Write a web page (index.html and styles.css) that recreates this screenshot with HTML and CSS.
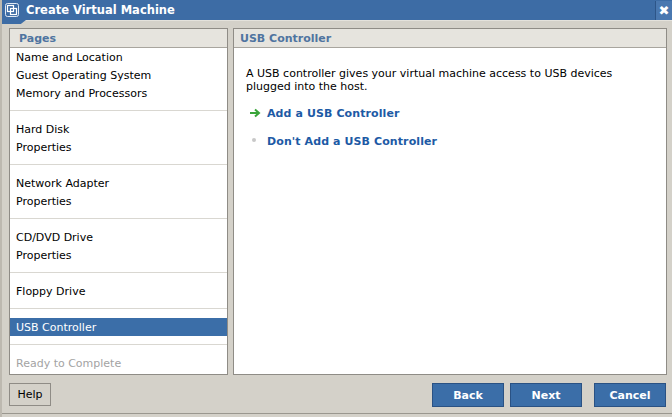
FILE: index.html
```html
<!DOCTYPE html>
<html>

<head>
    <meta charset="utf-8" />
    <title>Create Virtual Machine</title>
    <link rel="stylesheet" href="styles.css">
</head>

<body>
    <div class="window">

        <div class="titlebar">
            <svg class="title-icon" width="16" height="16" viewBox="0 0 16 16">
                <rect x="1.5" y="1.5" width="13" height="13" rx="2" fill="none" stroke="#dfe8f3" stroke-width="1" />
                <rect x="3.5" y="3.5" width="6" height="6" fill="none" stroke="#ffffff" stroke-width="1.2" />
                <rect x="6.5" y="6.5" width="6" height="6" fill="none" stroke="#ffffff" stroke-width="1.2" />
            </svg>
            <span class="title-text">Create Virtual Machine</span>
            <span class="close-btn">&#x2716;</span>
        </div>

        <div class="main">
            <div class="panel pages">
                <div class="panel-heading">Pages</div>
                <div class="group first">
                    <div class="item">Name and Location</div>
                    <div class="item">Guest Operating System</div>
                    <div class="item">Memory and Processors</div>
                </div>
                <div class="group">
                    <div class="item">Hard Disk</div>
                    <div class="item">Properties</div>
                </div>
                <div class="group">
                    <div class="item">Network Adapter</div>
                    <div class="item">Properties</div>
                </div>
                <div class="group">
                    <div class="item">CD/DVD Drive</div>
                    <div class="item">Properties</div>
                </div>
                <div class="group">
                    <div class="item">Floppy Drive</div>
                </div>
                <div class="group">
                    <div class="item selected">USB Controller</div>
                </div>
                <div class="group">
                    <div class="item disabled">Ready to Complete</div>
                </div>
            </div>

            <div class="panel content">
                <div class="panel-heading">USB Controller</div>
                <div class="content-body">
                    <p class="intro">A USB controller gives your virtual machine access to USB devices plugged into the host.</p>
                    <div class="choice">
                        <svg class="marker" width="12" height="10" viewBox="0 0 12 10">
                            <path d="M1 5 H9" stroke="#3aa53a" stroke-width="2" />
                            <path d="M6 1.5 L10 5 L6 8.5" fill="none" stroke="#3aa53a" stroke-width="2" />
                        </svg>
                        <span class="choice-link">Add a USB Controller</span>
                    </div>
                    <div class="choice">
                        <svg class="marker" width="12" height="10" viewBox="0 0 12 10">
                            <circle cx="5" cy="4" r="2" fill="#c8c8c8" />
                        </svg>
                        <span class="choice-link">Don't Add a USB Controller</span>
                    </div>
                </div>
            </div>
        </div>

        <div class="footer">
            <button class="help-btn">Help</button>
            <div class="nav-buttons">
                <button class="nav-btn">Back</button>
                <button class="nav-btn">Next</button>
                <button class="nav-btn cancel">Cancel</button>
            </div>
        </div>

    </div>
</body>

</html>
```

FILE: styles.css
```css
body {
    margin: 0;
    background: #d4d1c9;
    font-family: "DejaVu Sans", Verdana, sans-serif;
    font-size: 11px;
    color: #000;
}

.window {
    width: 672px;
    height: 417px;
    overflow: hidden;
    position: relative;
    border-left: 2px solid #bdb9b0;
    box-sizing: border-box;
}

.titlebar {
    height: 20px;
    background: #3d6ca5;
    display: flex;
    align-items: center;
    border-bottom: 1px solid #e4e2dc;
    margin-left: -2px;
    position: relative;
}

/* little tab under the window icon */
.titlebar::after {
    content: "";
    position: absolute;
    left: 0;
    top: 20px;
    width: 26px;
    height: 4px;
    background: #3d6ca5;
    clip-path: polygon(0 0, 100% 0, 80% 100%, 0 100%);
}

.title-icon {
    margin: 0 6px 0 4px;
}

.title-text {
    color: #fff;
    font-weight: bold;
    font-size: 11.5px;
    flex: 1;
}

.close-btn {
    width: 16px;
    height: 19px;
    background: #4a78b0;
    border-left: 1px solid #2d5588;
    color: #fff;
    font-size: 13px;
    display: flex;
    align-items: center;
    justify-content: center;
}

.main {
    display: flex;
    gap: 5px;
    padding: 7px 5px 0 7px;
}

.panel {
    background: #fff;
    border: 1px solid #8f8c86;
    height: 345px;
}

.pages {
    width: 217px;
}

.content {
    flex: 1;
}

.panel-heading {
    height: 18px;
    line-height: 19px;
    background: #e6e4de;
    border-bottom: 1px solid #a8a59e;
    color: #4f74a0;
    font-weight: bold;
    padding-left: 9px;
}

.content .panel-heading {
    padding-left: 6px;
}

.group {
    border-top: 1px solid #d9d7d1;
    padding: 9px 0 8px;
}

.group.first {
    border-top: none;
    padding-top: 0;
}

.item {
    height: 18px;
    line-height: 19px;
    padding-left: 6px;
    white-space: nowrap;
}

.item.selected {
    background: #3b6ea8;
    color: #fff;
}

.item.disabled {
    color: #a3a3a3;
}

.content-body {
    padding: 19px 12px 0 12px;
}

.intro {
    margin: 0 0 11px;
    line-height: 13px;
}

.choice {
    height: 18px;
    display: flex;
    align-items: center;
    margin-bottom: 10px;
}

.marker {
    margin: 0 6px 0 3px;
}

.choice-link {
    color: #1d5aa5;
    font-weight: bold;
    letter-spacing: 0.1px;
}

.footer {
    display: flex;
    justify-content: space-between;
    padding: 8px 6px 0 7px;
    height: 30px;
    border-bottom: 1px solid #9a978f;
}

.help-btn {
    width: 42px;
    height: 23px;
    background: #d4d1c9;
    border: 1px solid #8f8c86;
    font-family: "DejaVu Sans", Verdana, sans-serif;
    font-size: 11px;
    color: #000;
    padding: 0;
}

.nav-buttons {
    display: flex;
    gap: 6px;
}

.nav-btn {
    width: 72px;
    height: 24px;
    background: #3b6ea8;
    border: 1px solid #2a5284;
    color: #fff;
    font-family: "DejaVu Sans", Verdana, sans-serif;
    font-size: 11px;
    font-weight: bold;
    padding: 0;
}

.nav-btn.cancel {
    margin-left: 6px;
}
```
